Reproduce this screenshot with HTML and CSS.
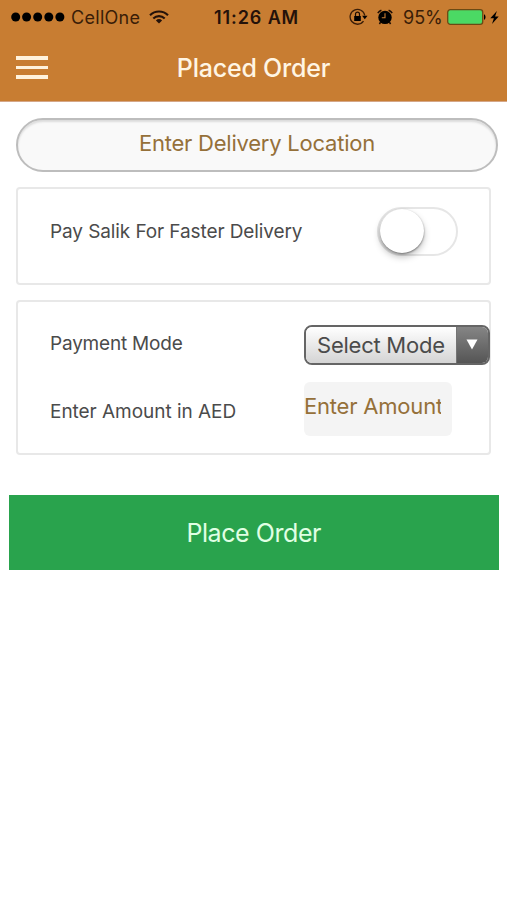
FILE: index.html
```html
<!DOCTYPE html>
<html lang="en">
<head>
<meta charset="utf-8">
<title>Placed Order</title>
<link rel="stylesheet" href="styles.css">
</head>
<body>
<header class="header">
  <div class="status">
    <div class="status-left">
      <svg class="signal" width="54" height="10" viewBox="0 0 54 10"><circle cx="4.7" cy="5" r="4.500"/><circle cx="15.6" cy="5" r="4.500"/><circle cx="26.7" cy="5" r="4.500"/><circle cx="37.8" cy="5" r="4.500"/><circle cx="48.9" cy="5" r="4.500"/></svg>
      <span class="carrier">CellOne</span>
      <svg class="wifi" width="20" height="14" viewBox="0 0 20 14"><path d="M1 5.2a12.8 12.8 0 0 1 18 0M4.3 8.5a8.1 8.1 0 0 1 11.4 0" fill="none" stroke="#24120a" stroke-width="2.1"/><path d="M6.9 10.5a4.5 4.5 0 0 1 6.2 0L10 13.6z" fill="#24120a"/></svg>
    </div>
    <div class="time">11:26 AM</div>
    <div class="status-right">
      <svg class="lock" width="19" height="18" viewBox="0 0 19 18"><path d="M14.5 13.2A7.4 7.4 0 1 1 15.8 7.5" fill="none" stroke="#3a1d08" stroke-width="1.3"/><path d="M13.1 7.7h5.4l-2.7 3.5z"/><path d="M5.2 8h6.6v5H5.2z"/><path d="M6.5 8V6.2a2 2 0 0 1 4 0V8" fill="none" stroke="#1c0d04" stroke-width="1.2"/></svg>
      <svg class="alarm" width="16" height="16" viewBox="0 0 16 16"><circle cx="8" cy="8.4" r="6.7"/><path d="M.8 4.2a8 8 0 0 1 3.6-3M15.2 4.2a8 8 0 0 0-3.6-3M3.7 13l-1.3 2M12.3 13l1.3 2" fill="none" stroke="#1c0d04" stroke-width="1.5"/><path d="M8 4.3v4.5H4.8" fill="none" stroke="#c87d32" stroke-width="1.1"/></svg>
      <span class="percent">95%</span>
      <svg class="battery" width="39" height="16" viewBox="0 0 39 16"><rect x=".7" y=".7" width="35" height="14.6" rx="2.6" fill="#4bd964" stroke="#6b4a14" stroke-width="1.3"/><path d="M37 5.2c2 .7 2 4.900 0 5.600z"/></svg>
      <svg class="bolt" width="9" height="13" viewBox="0 0 9 13"><path d="M6.900 0L.3 7.300h3.600L2 13l6.700-7.600H5.100z"/></svg>
    </div>
  </div>
  <div class="navbar">
    <button class="menu" aria-label="Menu"><i></i><i></i><i></i></button>
    <h1><span class="title">Placed Order</span></h1>
  </div>
</header>
<main>
  <div class="location"><span class="location-text">Enter Delivery Location</span></div>
  <section class="card salik">
    <span class="label salik-label">Pay Salik For Faster Delivery</span>
    <div class="toggle"><div class="knob"></div></div>
  </section>
  <section class="card payment">
    <span class="label mode-label">Payment Mode</span>
    <div class="select">
      <div class="select-value"><span>Select Mode</span></div>
      <div class="select-arrow"><svg width="12" height="11" viewBox="0 0 12 11"><path d="M.5.500h11L6 10.500z" fill="#fff"/></svg></div>
    </div>
    <span class="label amount-label">Enter Amount in AED</span>
    <div class="amount"><div class="amount-text"><span>Enter Amount</span></div></div>
  </section>
  <button class="submit"><span>Place Order</span></button>
</main>
</body>
</html>
```
FILE: styles.css
```css
* { box-sizing: border-box; }
body {
  margin: 0;
  background: #fff;
  font-family: Inter, "Liberation Sans", sans-serif;
  color: #4b4b4b;
}
button { border: 0; padding: 0; font: inherit; }
svg { display: block; flex: none; }
span, .time { white-space: nowrap; }
.header {
  height: 102px;
  background: #c87d32;
  border-bottom: 1px solid #d5a787;
}
.status {
  height: 34px;
  display: grid;
  grid-template-columns: 214px 86px 1fr;
  grid-template-rows: 34px;
  font-size: 18px;
  line-height: 32px;
  color: #3a1d08;
}
.status-left, .status-right { display: flex; align-items: center; height: 34px; }
.status-left { padding-left: 11px; }
.carrier { width: 70px; margin-left: 6px; padding-top: 2px; letter-spacing: .3px; }
.wifi { margin: -1px 0 0 8px; }
.time { padding-top: 2px; font-weight: 600; color: #24120a; letter-spacing: .9px; }
.status-right { padding-left: 49px; }
.alarm { margin-left: 9px; }
.percent { width: 39px; margin-left: 10px; padding-top: 2px; }
.battery { margin-left: 5px; }
.bolt { margin-left: 4px; }
.navbar {
  height: 67px;
  display: grid;
  grid-template-columns: 64px 1fr 64px;
  grid-template-rows: 67px;
  align-items: center;
}
.menu {
  width: 32px;
  margin-left: 16px;
  background: none;
  display: grid;
  gap: 6px;
}
.menu i { height: 3.5px; background: #fff2dc; }
h1 {
  margin: 0;
  padding-top: 2px;
  font-size: 25px;
  font-weight: 500;
  line-height: 65px;
  letter-spacing: -.22px;
  text-align: center;
  color: #fff5e4;
}
main { display: flex; flex-direction: column; padding: 16px 8px; }
.location {
  height: 54px;
  margin: 0 1px 0 8px;
  border: 2px solid #bdbdbd;
  border-radius: 27px;
  background: #f9f9f9;
  box-shadow: inset 0 2px 2px #dcdcdc;
  text-align: center;
  font-size: 22px;
  line-height: 47px;
  letter-spacing: -.23px;
  color: #957039;
}
.card {
  margin: 15px 8px 0;
  border: 2px solid #e8e8e8;
  border-radius: 4px;
}
.label { font-size: 19px; line-height: 24px; letter-spacing: -.1px; }
.salik {
  height: 98px;
  display: flex;
  justify-content: space-between;
  align-items: flex-start;
  padding: 18px 31px 0 32px;
}
.salik-label { margin-top: 13px; }
.toggle {
  width: 81px;
  height: 49px;
  border: 2px solid #e6e6e6;
  border-radius: 25px;
}
.knob {
  width: 44px;
  height: 44px;
  margin: 0 0 0 1px;
  border-radius: 50%;
  background: #fff;
  box-shadow: 0 1px 2px rgba(0,0,0,.45), 0 4px 7px rgba(0,0,0,.25);
}
.payment {
  height: 155px;
  display: grid;
  grid-template-columns: 254px 186px;
  grid-template-rows: 40px 54px;
  row-gap: 17px;
  padding: 23px 0 0 32px;
}
.mode-label { margin-top: 7px; letter-spacing: -.2px; }
.amount-label { margin-top: 18px; letter-spacing: -.04px; }
.select {
  display: flex;
  width: 186px;
  border: 2px solid #656565;
  border-radius: 8px;
  overflow: hidden;
}
.select-value {
  flex: 1;
  padding-left: 11px;
  background: linear-gradient(#fff, #d4d4d4);
  font-size: 22px;
  line-height: 37px;
  letter-spacing: -.24px;
}
.select-arrow {
  width: 32px;
  border-left: 1px solid #747474;
  background: linear-gradient(#858585, #555);
  display: flex;
  justify-content: center;
  padding: 12px 2px 0 0;
}
.amount {
  width: 148px;
  border-radius: 6px;
  background: #f4f4f4;
}
.amount-text {
  width: 137px;
  overflow: hidden;
  font-size: 22px;
  line-height: 48px;
  letter-spacing: -.2px;
  color: #957039;
}
.submit {
  height: 75px;
  margin: 39.5px 0 0 .5px;
  padding-top: 2px;
  background: #29a34d;
  font-size: 25px;
  line-height: 73px;
  letter-spacing: -.42px;
  color: #e0ffe4;
}
```
